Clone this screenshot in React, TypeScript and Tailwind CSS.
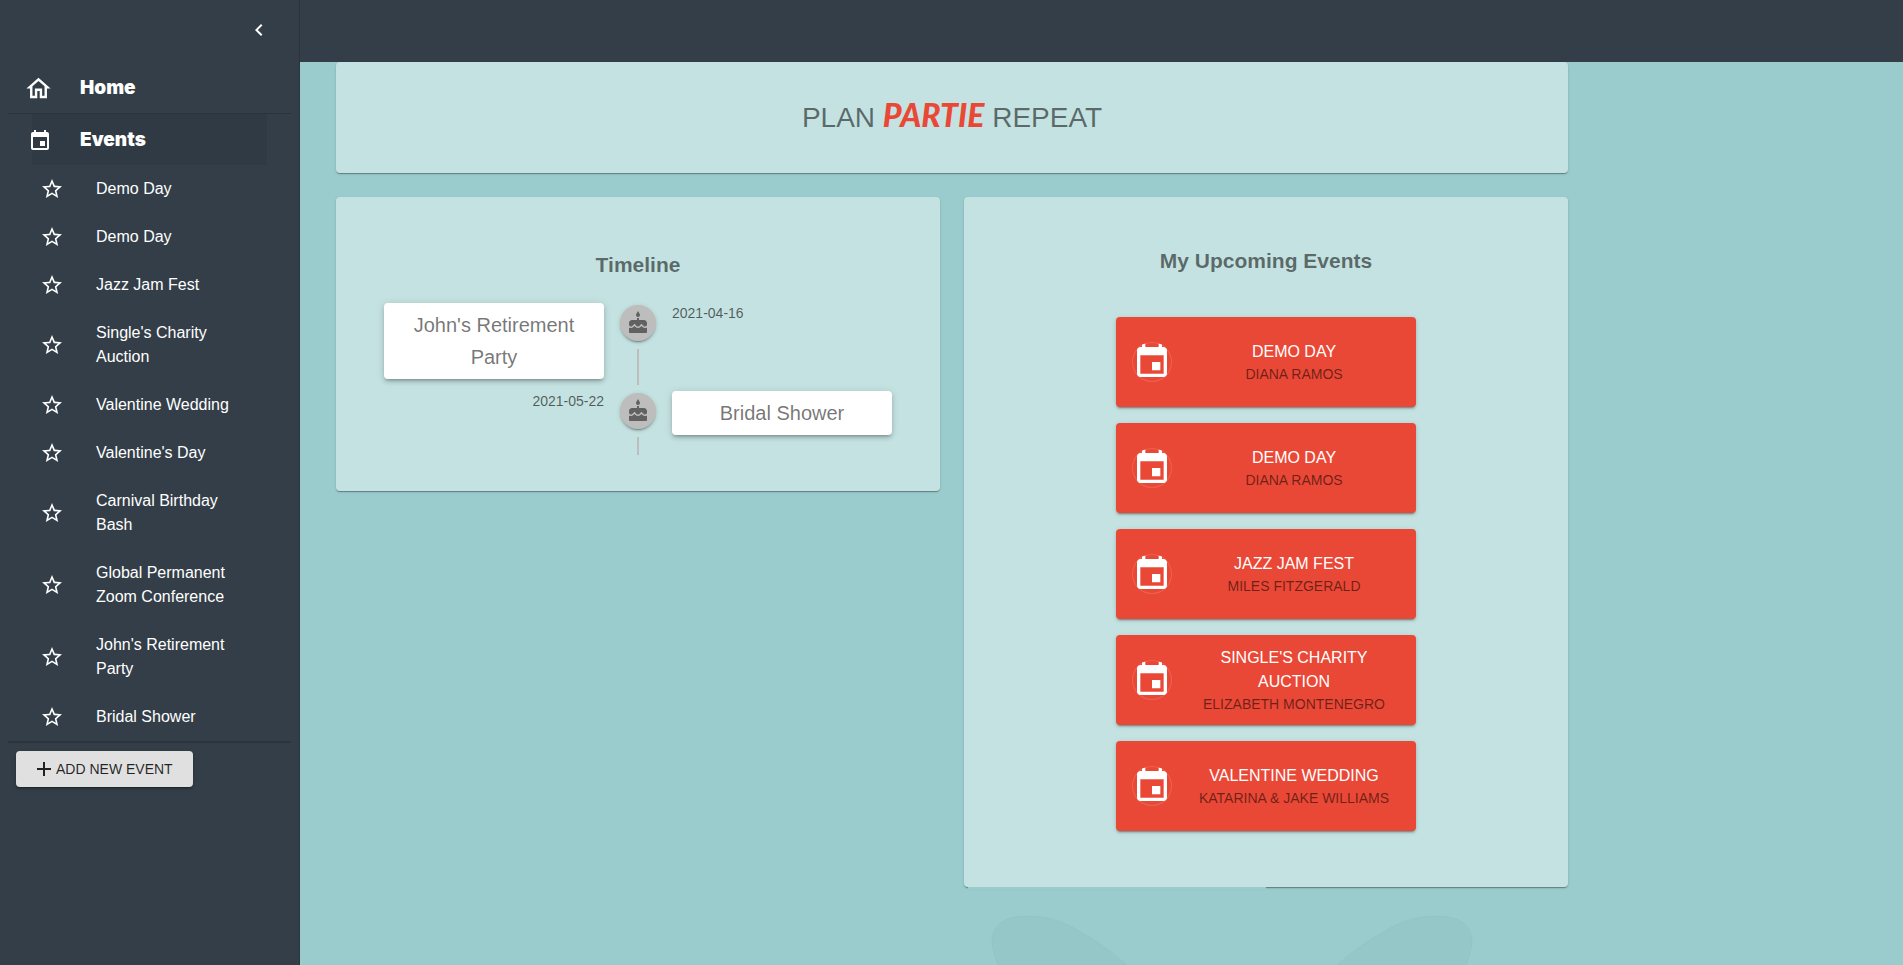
import React from "react";

type Guest = { title: string; host: string };
type Milestone = { title: string; date: string };

const sidebarEvents: string[] = [
  "Demo Day",
  "Demo Day",
  "Jazz Jam Fest",
  "Single's Charity Auction",
  "Valentine Wedding",
  "Valentine's Day",
  "Carnival Birthday Bash",
  "Global Permanent Zoom Conference",
  "John's Retirement Party",
  "Bridal Shower",
];

const upcoming: Guest[] = [
  { title: "Demo Day", host: "Diana Ramos" },
  { title: "Demo Day", host: "Diana Ramos" },
  { title: "Jazz Jam Fest", host: "Miles Fitzgerald" },
  { title: "Single's Charity Auction", host: "Elizabeth Montenegro" },
  { title: "Valentine Wedding", host: "Katarina & Jake Williams" },
];

const milestones: Milestone[] = [
  { title: "John's Retirement Party", date: "2021-04-16" },
  { title: "Bridal Shower", date: "2021-05-22" },
];

const paths = {
  chevron: "M15.41 7.41L14 6l-6 6 6 6 1.41-1.41L10.83 12z",
  home: "M12 5.69l5 4.5V18h-2v-6H9v6H7v-7.81l5-4.5M12 3L2 12h3v8h6v-6h2v6h6v-8h3L12 3z",
  event:
    "M17 12h-5v5h5v-5zM16 1v2H8V1H6v2H5c-1.11 0-1.99.9-1.99 2L3 19c0 1.1.89 2 2 2h14c1.1 0 2-.9 2-2V5c0-1.1-.9-2-2-2h-1V1h-2zm3 18H5V8h14v11z",
  star: "M22 9.24l-7.19-.62L12 2 9.19 8.63 2 9.24l5.46 4.73L5.82 21 12 17.27 18.18 21l-1.63-7.03L22 9.24zM12 15.4l-3.76 2.27 1-4.28-3.32-2.88 4.38-.38L12 6.1l1.71 4.04 4.38.38-3.32 2.88 1 4.28L12 15.4z",
  plus: "M19 13h-6v6h-2v-6H5v-2h6V5h2v6h6v2z",
  cake: "M12 6c1.11 0 2-.9 2-2 0-.38-.1-.73-.29-1.03L12 0l-1.71 2.97c-.19.3-.29.65-.29 1.03 0 1.1.9 2 2 2zm4.6 9.99l-1.07-1.07-1.08 1.07c-1.3 1.3-3.58 1.31-4.89 0l-1.07-1.07-1.09 1.07C6.75 16.64 5.88 17 4.96 17c-.73 0-1.4-.23-1.96-.61V21c0 .55.45 1 1 1h16c.55 0 1-.45 1-1v-4.61c-.56.38-1.23.61-1.96.61-.92 0-1.79-.36-2.44-1.01zM18 9h-5V7h-2v2H6c-1.66 0-3 1.34-3 3v1.54c0 1.08.88 1.96 1.96 1.96.52 0 1.02-.2 1.38-.57l2.14-2.13 2.13 2.13c.74.74 2.03.74 2.77 0l2.14-2.13 2.13 2.13c.37.37.86.57 1.38.57 1.08 0 1.96-.88 1.96-1.96V12C21 10.34 19.66 9 18 9z",
};

function Icon({ d, className }: { d: string; className: string }) {
  return (
    <svg viewBox="0 0 24 24" fill="currentColor" aria-hidden="true" className={className}>
      <path d={d} />
    </svg>
  );
}

const raised =
  "shadow-[0_2px_1px_-1px_rgba(0,0,0,0.2),0_1px_1px_0_rgba(0,0,0,0.14),0_1px_3px_0_rgba(0,0,0,0.12)]";
const lifted =
  "shadow-[0_3px_3px_-2px_rgba(0,0,0,0.2),0_3px_4px_0_rgba(0,0,0,0.14),0_1px_8px_0_rgba(0,0,0,0.12)]";
const floating =
  "shadow-[0_3px_1px_-2px_rgba(0,0,0,0.2),0_2px_2px_0_rgba(0,0,0,0.14),0_1px_5px_0_rgba(0,0,0,0.12)]";

function Sidebar() {
  return (
    <aside className="flex w-[300px] shrink-0 flex-col border-r border-black/15 bg-[#333e48] px-2 text-white">
      <div className="flex h-[62px] items-center justify-end pr-5 pb-[2px]">
        <button type="button" aria-label="Collapse menu" className="flex size-6 items-center justify-center">
          <Icon d={paths.chevron} className="size-6" />
        </button>
      </div>
      <nav className="flex flex-col">
        <a href="#home" className="flex h-[52px] items-center border-b border-black/15 pt-[2px] pl-4 font-['Inter',sans-serif] text-[19px] font-black">
          <Icon d={paths.home} className="mr-[27px] size-[29px]" />
          Home
        </a>
        <a
          href="#events"
          className="mr-6 ml-6 flex h-[51px] items-center bg-black/5 pt-[2px] font-['Inter',sans-serif] text-[19px] font-black"
        >
          <Icon d={paths.event} className="mr-7 -ml-1 size-6" />
          Events
        </a>
        <ul>
          {sidebarEvents.map((name, i) => (
            <li key={i}>
              <a href="#event" className="flex items-center py-3 pr-12 pl-8">
                <Icon d={paths.star} className="mr-8 size-6 shrink-0" />
                {name}
              </a>
            </li>
          ))}
        </ul>
      </nav>
      <div className="border-t-2 border-black/15 px-2 pt-2">
        <button
          type="button"
          className={`flex h-9 items-center rounded bg-[#e0e0e0] pr-5 pl-4 text-sm font-light text-black/85 ${floating}`}
        >
          <Icon d={paths.plus} className="size-6" />
          ADD NEW EVENT
        </button>
      </div>
    </aside>
  );
}

function Timeline() {
  return (
    <section className={`flex-1 rounded bg-[#c4e2e1] px-4 pt-[52px] pb-9 ${raised}`}>
      <h2 className="text-center text-[21px] leading-8 font-bold text-black/55">Timeline</h2>
      <ol className="mt-4 px-4">
        {milestones.map((m, i) => (
          <li key={m.title} className={i % 2 ? "flex min-h-[70px] flex-row-reverse" : "flex min-h-[70px]"}>
            <div className="flex-1 px-4 py-[6px]">
              <div
                className={`rounded bg-white px-4 py-[6px] text-center text-xl leading-8 text-black/55 ${lifted}`}
              >
                {m.title}
              </div>
            </div>
            <div className="flex flex-col items-center">
              <span className={`my-2 flex size-9 items-center justify-center rounded-full bg-[#bdbdbd] text-[#616161] ${floating}`}>
                <Icon d={paths.cake} className="size-6" />
              </span>
              <span className="w-[2px] flex-1 bg-[#bdbdbd]" />
            </div>
            <time className={i % 2 ? "flex-1 px-4 py-[6px] text-right text-sm text-black/60" : "flex-1 px-4 py-[6px] text-sm text-black/60"}>
              {m.date}
            </time>
          </li>
        ))}
      </ol>
    </section>
  );
}

function Upcoming() {
  return (
    <section className={`relative flex-1 rounded bg-[#c4e2e1] px-4 pt-12 pb-14 ${raised}`}>
      <h2 className="text-center text-[21px] leading-8 font-bold text-black/55">My Upcoming Events</h2>
      <ul className="mt-10 flex flex-col items-center gap-4">
        {upcoming.map((e, i) => (
          <li key={i} className={`flex h-[90px] w-[300px] items-center gap-4 rounded bg-[#ea4836] px-4 ${floating}`}>
            <span className="flex size-10 shrink-0 items-center justify-center overflow-hidden rounded-full text-white shadow-[inset_0_0_0_1px_rgba(255,255,255,0.14)]">
              <Icon d={paths.event} className="size-10 shrink-0" />
            </span>
            <div className="flex-1 text-center uppercase">
              <h3 className="text-base text-white">{e.title}</h3>
              <p className="text-sm text-black/55">{e.host}</p>
            </div>
          </li>
        ))}
      </ul>
      <span className="absolute top-full right-1/2 left-1 h-[2px] bg-[#9bcccd]" />
    </section>
  );
}

export default function App() {
  return (
    <div className="flex min-h-screen bg-[#9bcccd] font-['Liberation_Sans',Arial,sans-serif] text-base">
      <Sidebar />
      <div className="relative flex min-w-0 flex-1 flex-col">
        <header className="h-[62px] bg-[#333e48]" />
        <svg
          viewBox="0 0 482 50"
          aria-hidden="true"
          className="absolute bottom-0 left-[691px] h-[50px] w-[482px] fill-[#95c6c8] stroke-[#8fc0c2]"
          strokeWidth="0.5"
        >
          <path d="M7 51C2 36 1 30 1 25C2 9 14 1 37 1C55 1 72 6 88 16C105 25 120 36 137 51Z" />
          <path d="M475 51C480 36 481 30 481 25C480 9 468 1 445 1C427 1 410 6 394 16C377 25 362 36 345 51Z" />
        </svg>
        <main className="relative flex w-full max-w-[1268px] flex-col gap-6 pl-9">
          <h1
            className={`rounded bg-[#c4e2e1] py-9 text-center text-[28px] leading-[39px] text-black/55 ${raised}`}
          >
            PLAN{" "}
            <em className="font-['Lato',cursive] text-[32px] leading-none font-black text-[#ea4836] italic">PARTIE</em>{" "}
            REPEAT
          </h1>
          <div className="flex items-start gap-6">
            <Timeline />
            <Upcoming />
          </div>
        </main>
      </div>
    </div>
  );
}
